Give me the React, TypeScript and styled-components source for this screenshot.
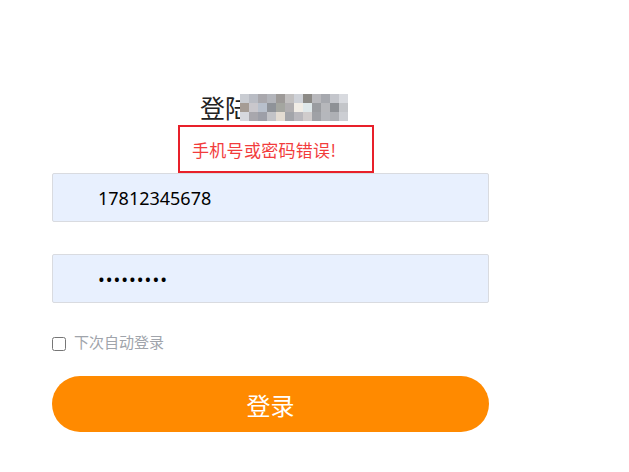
import styled, { createGlobalStyle } from 'styled-components';

const GlobalStyle = createGlobalStyle`
  html, body {
    margin: 0;
    padding: 0;
    background: #fff;
    font-family: 'Noto Sans', 'Noto Sans CJK SC', sans-serif;
  }
`;

const LoginPage = styled.div`
  width: 629px;
  height: 472px;
  padding: 91px 0 0 52px;
  box-sizing: border-box;
`;

const LoginForm = styled.form`
  width: 437px;
  display: flex;
  flex-direction: column;
`;

const Title = styled.h1`
  margin: 0 0 0 148px;
  height: 34px;
  font-size: 25px;
  line-height: 34px;
  font-weight: 400;
  color: #222;
  position: relative;
  width: 146px;
  white-space: nowrap;
`;

const Mosaic = styled.div`
  position: absolute;
  left: 40px;
  top: 3px;
  display: grid;
  grid-template-columns: repeat(12, 9px);
  grid-auto-rows: 9px;
`;

const MosaicCell = styled.span<{ $c: string }>`
  background: ${(p) => p.$c};
`;

const ErrorBox = styled.div`
  margin-left: 126px;
  width: 196px;
  height: 48px;
  box-sizing: border-box;
  border: 2px solid #e8202a;
  padding-left: 12px;
  display: flex;
  align-items: center;
  font-family: 'Noto Sans CJK SC', sans-serif;
  font-size: 17px;
  letter-spacing: 0.3px;
  color: #f23c3c;
`;

const Field = styled.input<{ $gap?: number; $spacing?: number }>`
  width: 100%;
  height: 49px;
  box-sizing: border-box;
  margin-top: ${(p) => p.$gap ?? 0}px;
  border: 1px solid #d9dbe0;
  border-radius: 2px;
  background: #e8f0fe;
  padding: 0 0 0 45px;
  font-family: 'Noto Sans', sans-serif;
  font-size: 18px;
  letter-spacing: ${(p) => p.$spacing ?? 0}px;
  color: #000;
  outline: none;
`;

const RememberRow = styled.label`
  margin-top: 30px;
  display: flex;
  align-items: flex-start;
  gap: 8px;
  font-family: 'Noto Sans CJK SC', sans-serif;
  font-size: 15px;
  color: #a0a4ab;
  line-height: 18px;
`;

const Check = styled.input`
  margin: 4px 0 0 0;
  width: 14px;
  height: 14px;
`;

const SubmitButton = styled.button`
  margin-top: 25px;
  width: 100%;
  height: 56px;
  border: none;
  border-radius: 28px;
  background: #ff8a00;
  color: #fff;
  font-family: 'Noto Sans CJK SC', sans-serif;
  font-size: 24px;
  cursor: pointer;
`;

const mosaicColors = [
  '#c9ccd2', '#b9bcc4', '#a9a8ad', '#b3b5bb', '#9d9a98', '#c2c0c0', '#cfd2d8', '#8c8a86', '#b8b8bc', '#a6a8ae', '#c4c6cc', '#d8dadf',
  '#a59c95', '#c9c7cc', '#b8c0cc', '#8f9399', '#a4a6a0', '#b0aeb0', '#f1ede6', '#dfe8ea', '#9a9ca0', '#b6b7bb', '#8e9196', '#c3c5c9',
  '#d6d8de', '#a8a7ad', '#9d9fa8', '#c2c3c7', '#e3dcd2', '#a3a5aa', '#b9b8bd', '#d0cccc', '#9fa1a6', '#b5b7bc', '#aeb0b5', '#ccced3',
];

const App = () => {
  return (
    <LoginPage>
      <GlobalStyle />
      <LoginForm onSubmit={(e) => e.preventDefault()}>
        <Title>
          登陆
          <Mosaic>
            {mosaicColors.map((c, i) => (
              <MosaicCell key={i} $c={c} />
            ))}
          </Mosaic>
        </Title>
        <ErrorBox>手机号或密码错误!</ErrorBox>
        <Field type="text" defaultValue="17812345678" />
        <Field type="password" defaultValue="123456789" $gap={32} $spacing={1} />
        <RememberRow>
          <Check type="checkbox" />
          下次自动登录
        </RememberRow>
        <SubmitButton type="submit">登录</SubmitButton>
      </LoginForm>
    </LoginPage>
  );
};

export default App;
